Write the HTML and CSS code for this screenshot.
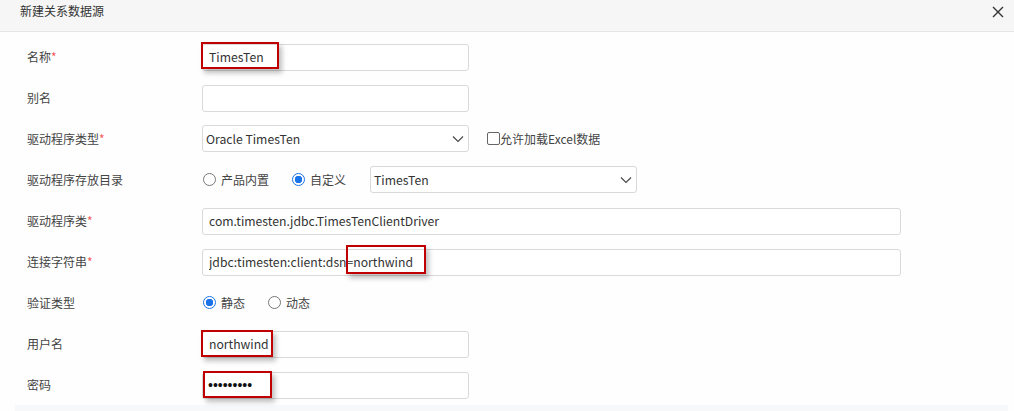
FILE: index.html
```html
<!DOCTYPE html>
<html lang="zh-CN">
<head>
    <meta charset="UTF-8">
    <title>新建关系数据源</title>
    <link rel="stylesheet" href="styles.css">
</head>
<body>
    <div class="dialog">
        <div class="dialog-header">
            <span class="dialog-title">新建关系数据源</span>
            <svg class="close-icon" width="12" height="12" viewBox="0 0 12 12">
                <path d="M1 1L11 11M11 1L1 11" stroke="#333" stroke-width="1.4" fill="none"/>
            </svg>
        </div>

        <div class="dialog-body">
            <div class="form-row">
                <label class="form-label">名称<em>*</em></label>
                <div class="field short">
                    <input class="text-input" type="text" value="TimesTen">
                    <span class="mark mark-name"></span>
                </div>
            </div>

            <div class="form-row">
                <label class="form-label">别名</label>
                <div class="field short">
                    <input class="text-input" type="text" value="">
                </div>
            </div>

            <div class="form-row">
                <label class="form-label">驱动程序类型<em>*</em></label>
                <div class="field short select">
                    <span class="select-value">Oracle TimesTen</span>
                    <svg class="chevron" width="12" height="8" viewBox="0 0 12 8"><path d="M1 1.5L6 6.5L11 1.5" stroke="#444" stroke-width="1.1" fill="none"/></svg>
                </div>
                <label class="check"><span class="check-box"></span>允许加载Excel数据</label>
            </div>

            <div class="form-row">
                <label class="form-label">驱动程序存放目录</label>
                <label class="radio"><span class="radio-dot"></span>产品内置</label>
                <label class="radio radio-gap"><span class="radio-dot on"></span>自定义</label>
                <div class="field short select">
                    <span class="select-value">TimesTen</span>
                    <svg class="chevron" width="12" height="8" viewBox="0 0 12 8"><path d="M1 1.5L6 6.5L11 1.5" stroke="#444" stroke-width="1.1" fill="none"/></svg>
                </div>
            </div>

            <div class="form-row">
                <label class="form-label">驱动程序类<em>*</em></label>
                <div class="field long">
                    <input class="text-input" type="text" value="com.timesten.jdbc.TimesTenClientDriver">
                </div>
            </div>

            <div class="form-row">
                <label class="form-label">连接字符串<em>*</em></label>
                <div class="field long">
                    <input class="text-input" type="text" value="jdbc:timesten:client:dsn=northwind">
                    <span class="mark mark-url"></span>
                </div>
            </div>

            <div class="form-row">
                <label class="form-label">验证类型</label>
                <label class="radio"><span class="radio-dot on"></span>静态</label>
                <label class="radio radio-gap2"><span class="radio-dot"></span>动态</label>
            </div>

            <div class="form-row">
                <label class="form-label">用户名</label>
                <div class="field short">
                    <input class="text-input" type="text" value="northwind">
                    <span class="mark mark-user"></span>
                </div>
            </div>

            <div class="form-row">
                <label class="form-label">密码</label>
                <div class="field short">
                    <input class="text-input pass" type="password" value="123456789">
                    <span class="mark mark-pass"></span>
                </div>
            </div>
        </div>

        <div class="dialog-footer"></div>
    </div>
</body>
</html>
```

FILE: styles.css
```css
body {
    margin: 0;
    padding: 0;
    background-color: #fff;
    font-family: "Noto Sans CJK SC", "Noto Sans", sans-serif;
    color: #333;
}

.dialog {
    width: 1014px;
    height: 411px;
    overflow: hidden;
    background-color: #fefefe;
}

.dialog-header {
    height: 32px;
    box-sizing: border-box;
    background-color: #f6f6f6;
    border-bottom: 1px solid #e6e6e6;
    display: flex;
    align-items: flex-start;
    justify-content: space-between;
    padding: 2px 10px 0 20px;
}

.dialog-title {
    font-size: 12px;
    color: #333;
}

.close-icon {
    margin-top: 4px;
}

.dialog-body {
    padding: 4px 0 0 27px;
}

.form-row {
    height: 41px;
    display: flex;
    align-items: center;
}

.form-label {
    width: 175px;
    font-size: 12px;
    color: #444;
}

.form-label em {
    font-style: normal;
    color: #f25a5a;
}

.field {
    position: relative;
    height: 27px;
    box-sizing: border-box;
}

.field.short {
    width: 267px;
}

.field.long {
    width: 699px;
}

.text-input {
    width: 100%;
    height: 27px;
    box-sizing: border-box;
    border: 1px solid #d9d9d9;
    border-radius: 3px;
    background-color: #fff;
    padding: 0 6px;
    font-family: "Noto Sans CJK SC", "Noto Sans", sans-serif;
    font-size: 12.2px;
    color: #333;
    outline: none;
}

.text-input.pass {
    font-family: "Liberation Sans", sans-serif;
    font-size: 14px;
    color: #111;
    padding-left: 5px;
}

.select {
    border: 1px solid #d9d9d9;
    border-radius: 3px;
    background-color: #fff;
    display: flex;
    align-items: center;
    justify-content: space-between;
    padding: 0 4px 0 3px;
    font-size: 12.2px;
}

.check {
    display: flex;
    align-items: center;
    margin-left: 18px;
    font-size: 12px;
    color: #444;
}

.check-box {
    width: 11px;
    height: 11px;
    border: 1px solid #666;
    border-radius: 2px;
    background-color: #fff;
}

.radio {
    display: flex;
    align-items: center;
    font-size: 12px;
    color: #444;
    margin-left: 1px;
}

.radio-dot {
    width: 11px;
    height: 11px;
    border: 1px solid #777;
    border-radius: 50%;
    margin-right: 5px;
    background-color: #fff;
}

.radio-dot.on {
    border-color: #1a73e8;
    background: radial-gradient(circle, #1a73e8 0, #1a73e8 3.5px, #fff 4px);
}

.radio-gap {
    margin-left: 23px;
    margin-right: 24px;
}

.radio-gap2 {
    margin-left: 23px;
}

.mark {
    position: absolute;
    border: 2px solid #c00000;
    box-sizing: border-box;
    box-shadow: 3px 4px 5px rgba(0, 0, 0, 0.25);
    pointer-events: none;
}

.mark-name {
    left: -1px;
    top: -1px;
    width: 78px;
    height: 27px;
}

.mark-url {
    left: 144px;
    top: -3px;
    width: 80px;
    height: 29px;
}

.mark-user {
    left: -1px;
    top: 0;
    width: 72px;
    height: 27px;
}

.mark-pass {
    left: 1px;
    top: 0;
    width: 69px;
    height: 27px;
}

.dialog-footer {
    margin: 0 6px 0 15px;
    height: 10px;
    background-color: #f7f8fa;
}
```
